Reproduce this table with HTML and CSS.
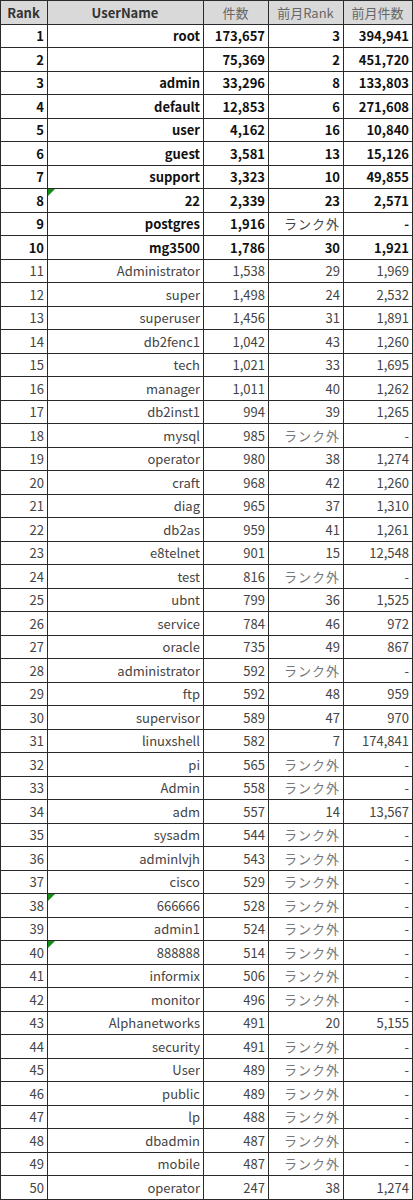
FILE: index.html
```html
<!DOCTYPE html>
<html lang="ja">
<head>
<meta charset="utf-8">
<title>UserName Ranking</title>
<link rel="stylesheet" href="styles.css">
</head>
<body>
<table class="rank-table">
<colgroup><col class="c-rank"><col class="c-user"><col class="c-count"><col class="c-prank"><col class="c-pcount"></colgroup>
<thead>
<tr><th class="h-strong">Rank</th><th class="h-strong">UserName</th><th>件数</th><th>前月Rank</th><th>前月件数</th></tr>
</thead>
<tbody>
<tr class="top"><td>1</td><td>root</td><td>173,657</td><td>3</td><td>394,941</td></tr>
<tr class="top"><td>2</td><td></td><td>75,369</td><td>2</td><td>451,720</td></tr>
<tr class="top"><td>3</td><td>admin</td><td>33,296</td><td>8</td><td>133,803</td></tr>
<tr class="top"><td>4</td><td>default</td><td>12,853</td><td>6</td><td>271,608</td></tr>
<tr class="top"><td>5</td><td>user</td><td>4,162</td><td>16</td><td>10,840</td></tr>
<tr class="top"><td>6</td><td>guest</td><td>3,581</td><td>13</td><td>15,126</td></tr>
<tr class="top"><td>7</td><td>support</td><td>3,323</td><td>10</td><td>49,855</td></tr>
<tr class="top"><td>8</td><td class="note">22</td><td>2,339</td><td>23</td><td>2,571</td></tr>
<tr class="top"><td>9</td><td>postgres</td><td>1,916</td><td class="out">ランク外</td><td>-</td></tr>
<tr class="top"><td>10</td><td>mg3500</td><td>1,786</td><td>30</td><td>1,921</td></tr>
<tr><td>11</td><td>Administrator</td><td>1,538</td><td>29</td><td>1,969</td></tr>
<tr><td>12</td><td>super</td><td>1,498</td><td>24</td><td>2,532</td></tr>
<tr><td>13</td><td>superuser</td><td>1,456</td><td>31</td><td>1,891</td></tr>
<tr><td>14</td><td>db2fenc1</td><td>1,042</td><td>43</td><td>1,260</td></tr>
<tr><td>15</td><td>tech</td><td>1,021</td><td>33</td><td>1,695</td></tr>
<tr><td>16</td><td>manager</td><td>1,011</td><td>40</td><td>1,262</td></tr>
<tr><td>17</td><td>db2inst1</td><td>994</td><td>39</td><td>1,265</td></tr>
<tr><td>18</td><td>mysql</td><td>985</td><td class="out">ランク外</td><td>-</td></tr>
<tr><td>19</td><td>operator</td><td>980</td><td>38</td><td>1,274</td></tr>
<tr><td>20</td><td>craft</td><td>968</td><td>42</td><td>1,260</td></tr>
<tr><td>21</td><td>diag</td><td>965</td><td>37</td><td>1,310</td></tr>
<tr><td>22</td><td>db2as</td><td>959</td><td>41</td><td>1,261</td></tr>
<tr><td>23</td><td>e8telnet</td><td>901</td><td>15</td><td>12,548</td></tr>
<tr><td>24</td><td>test</td><td>816</td><td class="out">ランク外</td><td>-</td></tr>
<tr><td>25</td><td>ubnt</td><td>799</td><td>36</td><td>1,525</td></tr>
<tr><td>26</td><td>service</td><td>784</td><td>46</td><td>972</td></tr>
<tr><td>27</td><td>oracle</td><td>735</td><td>49</td><td>867</td></tr>
<tr><td>28</td><td>administrator</td><td>592</td><td class="out">ランク外</td><td>-</td></tr>
<tr><td>29</td><td>ftp</td><td>592</td><td>48</td><td>959</td></tr>
<tr><td>30</td><td>supervisor</td><td>589</td><td>47</td><td>970</td></tr>
<tr><td>31</td><td>linuxshell</td><td>582</td><td>7</td><td>174,841</td></tr>
<tr><td>32</td><td>pi</td><td>565</td><td class="out">ランク外</td><td>-</td></tr>
<tr><td>33</td><td>Admin</td><td>558</td><td class="out">ランク外</td><td>-</td></tr>
<tr><td>34</td><td>adm</td><td>557</td><td>14</td><td>13,567</td></tr>
<tr><td>35</td><td>sysadm</td><td>544</td><td class="out">ランク外</td><td>-</td></tr>
<tr><td>36</td><td>adminlvjh</td><td>543</td><td class="out">ランク外</td><td>-</td></tr>
<tr><td>37</td><td>cisco</td><td>529</td><td class="out">ランク外</td><td>-</td></tr>
<tr><td>38</td><td class="note">666666</td><td>528</td><td class="out">ランク外</td><td>-</td></tr>
<tr><td>39</td><td>admin1</td><td>524</td><td class="out">ランク外</td><td>-</td></tr>
<tr><td>40</td><td class="note">888888</td><td>514</td><td class="out">ランク外</td><td>-</td></tr>
<tr><td>41</td><td>informix</td><td>506</td><td class="out">ランク外</td><td>-</td></tr>
<tr><td>42</td><td>monitor</td><td>496</td><td class="out">ランク外</td><td>-</td></tr>
<tr><td>43</td><td>Alphanetworks</td><td>491</td><td>20</td><td>5,155</td></tr>
<tr><td>44</td><td>security</td><td>491</td><td class="out">ランク外</td><td>-</td></tr>
<tr><td>45</td><td>User</td><td>489</td><td class="out">ランク外</td><td>-</td></tr>
<tr><td>46</td><td>public</td><td>489</td><td class="out">ランク外</td><td>-</td></tr>
<tr><td>47</td><td>lp</td><td>488</td><td class="out">ランク外</td><td>-</td></tr>
<tr><td>48</td><td>dbadmin</td><td>487</td><td class="out">ランク外</td><td>-</td></tr>
<tr><td>49</td><td>mobile</td><td>487</td><td class="out">ランク外</td><td>-</td></tr>
<tr><td>50</td><td>operator</td><td>247</td><td>38</td><td>1,274</td></tr>
</tbody>
</table>
</body>
</html>
```
FILE: styles.css
```css
html, body {
  margin: 0;
  padding: 0;
  background: #ffffff;
}
body {
  font-family: "Noto Sans CJK JP", "Noto Sans", sans-serif;
  font-size: 13px;
  color: #444;
}
.rank-table {
  width: 412px;
  border-collapse: collapse;
  table-layout: fixed;
  border: 1px solid #222;
}
.c-rank { width: 47px; }
.c-user { width: 156px; }
.c-count { width: 65px; }
.c-prank { width: 75px; }
.c-pcount { width: 69px; }
.rank-table th,
.rank-table td {
  border: 1px solid #2a2a2a;
  height: 22.5px;
  padding: 0 3px 0 2px;
  line-height: 1;
  white-space: nowrap;
  overflow: hidden;
}
.rank-table th {
  background: #d9d9d9;
  font-weight: normal;
  color: #666;
  text-align: center;
}
.rank-table th.h-strong {
  font-weight: bold;
  color: #333;
}
.rank-table td {
  text-align: right;
  position: relative;
}
.rank-table tr.top td {
  font-weight: bold;
  color: #111;
}
.rank-table tr td.out {
  color: #777;
  font-weight: normal;
  letter-spacing: 1px;
}
.rank-table tr.top td.out {
  color: #444;
}
.rank-table td.note::before {
  content: "";
  position: absolute;
  left: 0;
  top: 0;
  width: 0;
  height: 0;
  border-top: 7px solid #178a17;
  border-right: 7px solid transparent;
}
```
